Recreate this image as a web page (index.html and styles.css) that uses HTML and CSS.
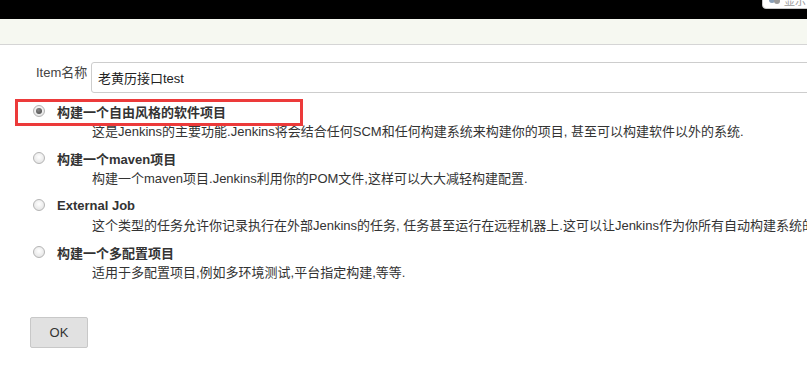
FILE: index.html
```html
<!DOCTYPE html>
<html lang="zh-CN">
<head>
<meta charset="utf-8">
<title>新建任务</title>
<link rel="stylesheet" href="styles.css">
</head>
<body>
<div class="topbar">
  <div class="tip"><svg class="tip-icon" width="14" height="10" viewBox="0 0 14 10"><circle cx="4" cy="3" r="3" fill="#8aa0b8"/><circle cx="9" cy="4" r="3" fill="#9a9a9a"/></svg><span class="tip-text">显示</span></div>
</div>
<div class="subbar"></div>
<main class="page">
  <div class="name-row">
    <label class="name-label">Item名称</label>
    <div class="name-input">老黄历接口test</div>
  </div>
  <div class="options">
    <div class="option">
      <span class="annot"></span>
      <div class="option-head"><span class="radio checked"></span><span class="option-title">构建一个自由风格的软件项目</span></div>
      <div class="option-desc">这是Jenkins的主要功能.Jenkins将会结合任何SCM和任何构建系统来构建你的项目, 甚至可以构建软件以外的系统.</div>
    </div>
    <div class="option">
      <div class="option-head"><span class="radio"></span><span class="option-title">构建一个maven项目</span></div>
      <div class="option-desc">构建一个maven项目.Jenkins利用你的POM文件,这样可以大大减轻构建配置.</div>
    </div>
    <div class="option">
      <div class="option-head"><span class="radio"></span><span class="option-title">External Job</span></div>
      <div class="option-desc">这个类型的任务允许你记录执行在外部Jenkins的任务, 任务甚至运行在远程机器上.这可以让Jenkins作为你所有自动构建系统的仪表盘.</div>
    </div>
    <div class="option">
      <div class="option-head"><span class="radio"></span><span class="option-title">构建一个多配置项目</span></div>
      <div class="option-desc">适用于多配置项目,例如多环境测试,平台指定构建,等等.</div>
    </div>
  </div>
  <div class="actions"><button class="ok-btn" type="button">OK</button></div>
</main>
</body>
</html>
```
FILE: styles.css
```css
html, body {
  margin: 0;
  padding: 0;
  background: #fff;
  overflow: hidden;
}
body {
  font-family: "Liberation Sans", Arial, "Noto Sans CJK SC", sans-serif;
  font-size: 13px;
  color: #333;
  width: 807px;
  height: 366px;
}
.topbar {
  height: 19px;
  background: #000;
  position: relative;
}
.tip {
  position: absolute;
  right: -4px;
  top: -6px;
  height: 13px;
  padding: 0 4px 0 5px;
  background: #fff;
  border: 1px solid #c8c8c8;
  border-radius: 0 0 0 4px;
  display: flex;
  align-items: flex-end;
  gap: 2px;
  font-size: 11px;
  color: #9a9a9a;
  line-height: 13px;
  overflow: hidden;
}
.tip-icon { margin-bottom: 1px; }
.subbar {
  height: 25px;
  background: #f6f8f1;
  border-bottom: 1px solid #d5d5d5;
}
.page {
  padding-top: 17px;
}
.name-row {
  display: flex;
  align-items: flex-start;
  padding-left: 36px;
  gap: 5px;
  white-space: nowrap;
}
.name-label {
  width: 50px;
  line-height: 18px;
  margin-top: 2px;
  color: #444;
}
.name-input {
  flex: none;
  width: 740px;
  box-sizing: border-box;
  height: 31px;
  line-height: 31px;
  border: 1px solid #cdcdcd;
  border-radius: 3px;
  padding-left: 6px;
  color: #222;
}
.options {
  margin-top: 8px;
  display: flex;
  flex-direction: column;
  gap: 6px;
}
.option {
  position: relative;
  white-space: nowrap;
}
.option-head {
  display: flex;
  align-items: center;
  height: 20px;
  padding-left: 33px;
  gap: 12px;
}
.option-title {
  font-weight: bold;
  color: #333;
}
.option-desc {
  padding-left: 92px;
  line-height: 21px;
  color: #333;
}
.radio {
  width: 10px;
  height: 10px;
  border-radius: 50%;
  border: 1px solid #b4b4b4;
  background: radial-gradient(circle at 50% 40%, #ffffff 0%, #e8e8e8 70%, #d4d4d4 100%);
  display: flex;
  align-items: center;
  justify-content: center;
  flex: none;
}
.radio.checked::after {
  content: "";
  width: 6px;
  height: 6px;
  border-radius: 50%;
  background: radial-gradient(circle at 40% 35%, #888 0%, #444 100%);
}
.annot {
  position: absolute;
  left: 15px;
  top: -2px;
  width: 282px;
  height: 21px;
  border: 3px solid #ec3a3a;
}
.actions {
  padding: 34px 0 0 30px;
}
.ok-btn {
  width: 58px;
  height: 31px;
  font-family: "Liberation Sans", Arial, sans-serif;
  font-size: 13px;
  color: #333;
  background: #e1e1e1;
  border: 1px solid #c8c8c8;
  border-radius: 2px;
  padding: 0;
}
```
